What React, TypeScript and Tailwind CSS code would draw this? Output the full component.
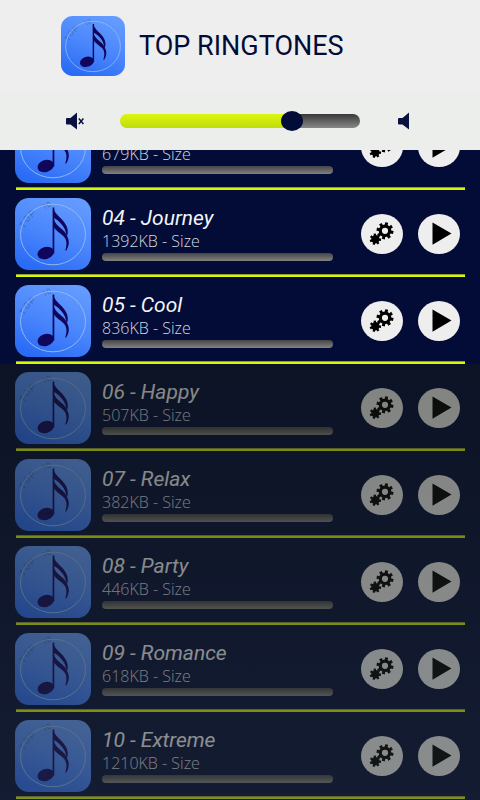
import React, { useState } from "react";

type Ringtone = { title: string; size: string };

const unlocked: Ringtone[] = [
  { title: "03 - Dream", size: "679KB - Size" },
  { title: "04 - Journey", size: "1392KB - Size" },
  { title: "05 - Cool", size: "836KB - Size" },
];

const locked: Ringtone[] = [
  { title: "06 - Happy", size: "507KB - Size" },
  { title: "07 - Relax", size: "382KB - Size" },
  { title: "08 - Party", size: "446KB - Size" },
  { title: "09 - Romance", size: "618KB - Size" },
  { title: "10 - Extreme", size: "1210KB - Size" },
];

// outline of a cog with square teeth
function cog(cx: number, cy: number, outer: number, inner: number, teeth: number, turn: number) {
  const step = (Math.PI * 2) / teeth;
  const points: string[] = [];
  for (let i = 0; i < teeth; i++) {
    const a = i * step + turn;
    [
      [inner, -0.3],
      [outer, -0.23],
      [outer, 0.23],
      [inner, 0.3],
    ].forEach(([r, o]) => {
      points.push(`${(cx + r * Math.cos(a + o * step)).toFixed(2)} ${(cy + r * Math.sin(a + o * step)).toFixed(2)}`);
    });
  }
  return `M${points.join("L")}Z`;
}

const bigCog = cog(24, 16.8, 8.6, 6.3, 8, 0.2) + "M20.9 16.8a3.1 3.1 0 1 0 6.2 0a3.1 3.1 0 1 0 -6.2 0Z";
const smallCog = cog(14.4, 25.2, 5.8, 4.2, 7, 0.1);

function NoteIcon({ id, className }: { id: string; className: string }) {
  return (
    <svg viewBox="0 0 76 72" preserveAspectRatio="none" className={className} aria-hidden="true">
      <defs>
        <linearGradient id={id} x1="0.7" y1="0" x2="0.3" y2="1">
          <stop offset="0" stopColor="#649bff" />
          <stop offset="0.5" stopColor="#4b87fc" />
          <stop offset="1" stopColor="#2a6bf5" />
        </linearGradient>
      </defs>
      <rect width="76" height="72" rx="14" fill={`url(#${id})`} />
      <g fill="#2f5aa8" fillOpacity="0.65" fontFamily="Roboto, sans-serif" fontSize="9">
        <text transform="translate(9 31) rotate(-55)">T</text>
        <text transform="translate(12 25) rotate(-48)">O</text>
        <text transform="translate(17 20) rotate(-40)">P</text>
        <text transform="translate(29 12) rotate(-28)" fontSize="8">10</text>
      </g>
      <ellipse cx="38" cy="36.5" rx="32.5" ry="30.3" fill="none" stroke="#8fb8f0" strokeWidth="1" />
      <g fill="#10065c">
        <ellipse cx="30.7" cy="55" rx="8.4" ry="6" transform="rotate(-18 30.7 55)" />
        <rect x="37.6" y="9.5" width="1.7" height="46" />
        <path d="M38.5 10C40 18.500 52.800 22.500 52.800 33.500C52.800 36 52.300 38 51.500 39C51.200 29.500 45.500 24 38.500 19.500Z" />
        <path d="M38.500 20.500C41 29.500 49.500 30.500 52 38C54.800 43 54.200 48 51.100 52.700L50.300 52.300C52.500 45.500 51.500 40.500 48 37.700C45 35.200 41.500 33 38.500 29Z" />
      </g>
    </svg>
  );
}

function RingtoneRow({ item, id }: { item: Ringtone; id: string }) {
  return (
    <li>
      <div className="flex items-center pt-2 pb-1 pl-[15px] pr-5">
        <NoteIcon id={id} className="w-[76px] h-[72px] shrink-0" />
        <div className="flex-1 min-w-0 ml-[11px] mr-7 self-start pt-2">
          <h2 className="font-[Roboto,sans-serif] italic text-[21px] leading-6 text-[#f4f4f6] truncate">{item.title}</h2>
          <p className="font-['Open_Sans',sans-serif] font-light text-[16px] leading-[22px] text-[#d4d7e0]">{item.size}</p>
          <div className="h-2 mt-px rounded-full bg-linear-to-b from-[#454545] to-[#828282]" />
        </div>
        <div className="flex gap-[15px] shrink-0">
          <button type="button" aria-label={`Settings for ${item.title}`} className="w-[42px] h-10 rounded-[50%] bg-[#eeeeee]">
            <svg viewBox="0 0 42 40" className="w-full h-full" fill="#000">
              <path fillRule="evenodd" d={bigCog} />
              <path d={smallCog} />
            </svg>
          </button>
          <button type="button" aria-label={`Play ${item.title}`} className="w-[42px] h-10 rounded-[50%] bg-[#eeeeee]">
            <svg viewBox="0 0 42 40" className="w-full h-full" fill="#000">
              <path d="M14.500 8.500L33.500 19.500L14.500 30.800Z" />
            </svg>
          </button>
        </div>
      </div>
      <div className="h-[3px] ml-4 mr-[15px] bg-[#d8f800] border-t border-[#8f9d35]" />
    </li>
  );
}

export default function App() {
  const [volume, setVolume] = useState(74);

  return (
    <div className="h-screen flex flex-col overflow-hidden bg-[#020c36]">
      <header className="shrink-0 bg-[#eeeeee]">
        <div className="flex items-center gap-[14px] h-[92px] pl-[61px]">
          <NoteIcon id="note-logo" className="w-16 h-[60px]" />
          <h1 className="font-[Roboto,sans-serif] text-[27px] leading-8 text-[#020c36]">TOP RINGTONES</h1>
        </div>
        <div className="flex items-center h-[58px] pl-[66px] pr-[71px] bg-[#eceeeb]">
          <svg viewBox="0 0 18 18" className="w-[18px] h-[18px] shrink-0" aria-hidden="true">
            <path d="M0 7Q0 6 1 6H4.500L11 0.500V17.500L4.500 12.500H1Q0 12.500 0 11.500Z" fill="#08113f" />
            <path d="M12.800 6.500L17.400 12M17.400 6.500L12.800 12" stroke="#08113f" strokeWidth="1.500" />
          </svg>
          <input
            type="range"
            min={0}
            max={100}
            value={volume}
            onChange={(e) => setVolume(Number(e.target.value))}
            aria-label="Volume"
            className="appearance-none flex-1 min-w-0 h-[14px] ml-9 mr-[38px] rounded-full bg-no-repeat bg-[image:linear-gradient(#dcf60f,#c0dc0a),linear-gradient(#383838,#888888)] [&::-webkit-slider-thumb]:appearance-none [&::-webkit-slider-thumb]:w-[22px] [&::-webkit-slider-thumb]:h-5 [&::-webkit-slider-thumb]:rounded-[50%] [&::-webkit-slider-thumb]:bg-[#020c36]"
            style={{ backgroundSize: `${volume}% 100%, 100% 100%` }}
          />
          <svg viewBox="0 0 11 18" className="w-[11px] h-[18px] shrink-0" aria-hidden="true">
            <path d="M0 7Q0 6 1 6H4.500L11 0.500V17.500L4.500 12.500H1Q0 12.500 0 11.500Z" fill="#08113f" />
          </svg>
        </div>
      </header>

      <main className="flex-1 min-h-0 overflow-hidden flex flex-col">
        {/* list is scrolled part of the way into the third tone */}
        <ul className="-mt-[47px] shrink-0">
          {unlocked.map((item, i) => (
            <RingtoneRow key={item.title} item={item} id={`note-a${i}`} />
          ))}
        </ul>
        <div className="relative grow shrink-0">
          <ul>
            {locked.map((item, i) => (
              <RingtoneRow key={item.title} item={item} id={`note-b${i}`} />
            ))}
          </ul>
          <div className="absolute inset-0 pointer-events-none bg-linear-to-b from-[#161a15]/50 to-[#262c2f]/50" />
        </div>
      </main>
    </div>
  );
}
